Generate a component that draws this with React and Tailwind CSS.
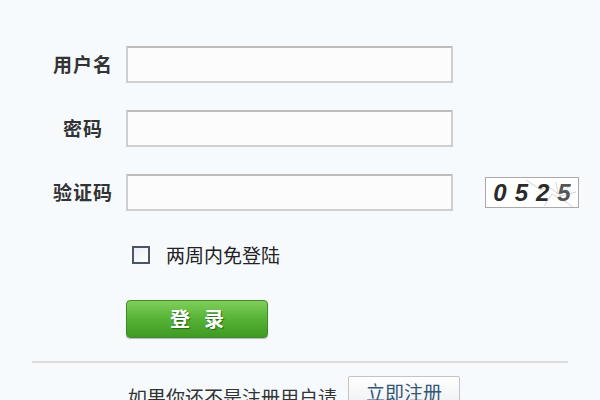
import React from 'react';

const font = { fontFamily: '"Noto Sans CJK SC", "Noto Sans", sans-serif' };

const Field = ({ label, children }) => (
  <div className="flex items-center h-[37px]">
    <div className="ml-[40px] w-[86px] text-center text-[19px] font-bold text-[#333] tracking-[1px]">{label}</div>
    <input
      className="w-[327px] h-[37px] bg-[#fcfcfc] border-2 border-[#cfcfcf] border-t-[#bdbdbd] outline-none"
      type="text"
    />
    {children}
  </div>
);

const Captcha = () => (
  <div className="ml-[32px] w-[94px] h-[31px] border border-[#a9a9a9] bg-white relative overflow-hidden flex items-center justify-center">
    <svg className="absolute inset-0" width="94" height="31" viewBox="0 0 94 31">
      <path d="M40 2 L55 12 L62 8 L75 18 L90 14" stroke="#d0d0d0" fill="none" strokeWidth="1" />
      <path d="M58 28 L66 16 L80 24 L88 30" stroke="#d6d6d6" fill="none" strokeWidth="1" />
      <path d="M70 4 L72 16 L84 8" stroke="#dadada" fill="none" strokeWidth="1" />
    </svg>
    <span
      className="relative whitespace-nowrap italic font-bold text-[24px] leading-none text-[#2a2a2a] flex gap-[8px]"
      style={{ fontFamily: '"Liberation Sans", Arial, sans-serif' }}
    >
      <span>0</span>
      <span>5</span>
      <span>2</span>
      <span className="text-[#555]">5</span>
    </span>
  </div>
);

export default function App() {
  return (
    <div className="w-[600px] h-[400px] overflow-hidden bg-[#f6fafd] relative" style={font}>
      <div className="pt-[46px] flex flex-col gap-[27px]">
        <Field label="用户名" />
        <Field label="密码" />
        <Field label="验证码">
          <Captcha />
        </Field>
      </div>

      <div className="mt-[30px] ml-[132px] flex items-center">
        <div className="w-[18px] h-[18px] border-2 border-[#4b5563] bg-gradient-to-br from-[#e8eef3] to-white" />
        <span className="ml-[16px] text-[19px] text-[#222]">两周内免登陆</span>
      </div>

      <button className="mt-[30px] ml-[126px] w-[142px] h-[38px] rounded-[4px] border border-[#3f8a2a] bg-gradient-to-b from-[#7fcf5a] via-[#56b336] to-[#3e9a22] text-white text-[20px] font-bold tracking-[14px] pl-[14px] shadow-[0_1px_1px_rgba(0,0,0,0.25)] [text-shadow:1px_1px_1px_rgba(20,80,10,0.7)]">
        登录
      </button>

      <div className="mt-[23px] mx-[32px] h-[2px] bg-[#dcdcdc]" />

      <div className="mt-[13px] flex items-start">
        <span className="ml-[128px] mt-[7px] text-[19px] text-[#333] whitespace-nowrap">如果你还不是注册用户请</span>
        <button className="ml-[11px] w-[112px] h-[34px] border border-[#c4c4c4] bg-gradient-to-b from-white to-[#eceef0] rounded-[2px] text-[19px] text-[#335577]">
          立即注册
        </button>
      </div>
    </div>
  );
}
